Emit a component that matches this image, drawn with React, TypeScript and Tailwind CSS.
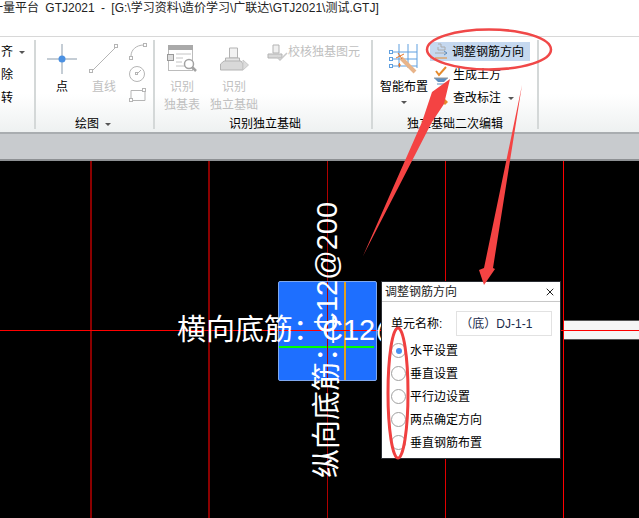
import { X } from "lucide-react";

const font = { fontFamily: '"Liberation Sans", "Noto Sans CJK SC", "DejaVu Sans", sans-serif' };

const Divider = () => <div className="w-[2px] shrink-0 self-stretch my-[3px] bg-[#d4d8d8]" />;

const GroupLabel = ({ children }: { children: React.ReactNode }) => (
  <div className="absolute bottom-0 left-0 right-0 text-center text-[12px] leading-[16px] text-black">{children}</div>
);

const Point = () => (
  <svg width="30" height="30" viewBox="0 0 30 30">
    <path d="M15 0V30M0 15H30" stroke="#8a9bab" strokeWidth="1" />
    <circle cx="15" cy="15" r="3.5" fill="#4a90e2" />
  </svg>
);

const Line = () => (
  <svg width="30" height="30" viewBox="0 0 30 30" fill="none" stroke="#b5b5b5">
    <path d="M3 27L27 3" />
    <rect x="0.5" y="25.5" width="3" height="3" fill="#fff" />
    <rect x="25.5" y="0.5" width="3" height="3" fill="#fff" />
  </svg>
);

const ShapeIcons = () => (
  <div className="flex flex-col gap-[6px] ml-[-2px] mt-[-1px]">
    <svg width="18" height="17" viewBox="0 0 18 17" fill="none" stroke="#b5b5b5">
      <path d="M2 13C2 7 7 2 15 2" />
      <rect x="0.5" y="13.5" width="3" height="3" fill="#fff" />
      <rect x="14.5" y="0.5" width="3" height="3" fill="#fff" />
    </svg>
    <svg width="18" height="16" viewBox="0 0 18 16" fill="none" stroke="#b5b5b5">
      <circle cx="8" cy="8" r="7.5" />
      <path d="M8 8L12 4" />
      <rect x="6.5" y="6.5" width="2" height="2" fill="#fff" />
    </svg>
    <svg width="18" height="14" viewBox="0 0 18 14" fill="none" stroke="#b5b5b5">
      <path d="M2 12.5V2.5H16V12.5Z" />
      <rect x="0.5" y="10.5" width="3" height="3" fill="#fff" />
      <rect x="13.5" y="0.5" width="3" height="3" fill="#fff" />
    </svg>
  </div>
);

const TableScan = () => (
  <svg width="31" height="28" viewBox="0 0 31 28" fill="none">
    <rect x="1.5" y="1.5" width="24" height="24" stroke="#bcbcbc" />
    <rect x="1" y="0" width="25" height="5" fill="#a9a9a9" />
    <path d="M9 9H24M9 13H16M9 17H15M9 21H18" stroke="#c4c4c4" />
    <rect x="0.5" y="9.5" width="6" height="6" fill="#ddd" stroke="#999" />
    <circle cx="22" cy="19" r="4.5" fill="#fff" stroke="#a3a3a3" strokeWidth="1.5" />
    <path d="M25 22L29 26" stroke="#a3a3a3" strokeWidth="2.5" />
  </svg>
);

const Machine = () => (
  <svg width="29" height="24" viewBox="0 0 29 24" fill="none" stroke="#b3b3b3">
    <path d="M9.5 1H17.5V11H9.5Z" fill="#f2f2f2" />
    <path d="M5.5 11H19.5V16H5.5Z" fill="#e4e4e4" />
    <path d="M0.5 17L4 14H21L23 17V23H0.5Z" fill="#d8d8d8" />
    <path d="M23 13L28.5 18L23 23Z" fill="#dcdcdc" stroke="#c8c8c8" />
  </svg>
);

const Check = () => (
  <svg width="21" height="17" viewBox="0 0 21 17" fill="none" stroke="#b3b3b3">
    <path d="M6 1H12V9H6Z" fill="#f0f0f0" />
    <path d="M1 10H15V14H1Z" fill="#d8d8d8" />
    <path d="M10 13L13 16L20 9" stroke="#c9c9c9" strokeWidth="1.5" />
  </svg>
);

const Wand = () => (
  <svg width="30" height="30" viewBox="0 0 30 30" fill="none">
    <path d="M10 0V24M19 0V24M28 0V24M3 8H28M3 15H28M3 22H28" stroke="#5f9fdf" />
    <rect x="0.5" y="6.5" width="3" height="3" stroke="#5f9fdf" />
    <rect x="0.5" y="13.5" width="3" height="3" stroke="#5f9fdf" />
    <rect x="0.5" y="20.5" width="3" height="3" stroke="#5f9fdf" />
    <path d="M12 14L26 28" stroke="#e8b48a" strokeWidth="4" />
    <path d="M9 9L13 15M7 14L15 10M9 21L12 21M10.5 19V23" stroke="#e5762a" />
  </svg>
);

const AdjustIcon = () => (
  <svg width="14" height="17" viewBox="0 0 14 17" fill="none">
    <path d="M4 1H7V4H11V7H4V4M1 10H13" stroke="#aaa" />
    <path d="M1 15H13" stroke="#e58a2c" />
    <path d="M10 8L13 10L10 12" stroke="#5f8fc0" />
  </svg>
);

const EarthIcon = () => (
  <svg width="16" height="19" viewBox="0 0 16 19" fill="none">
    <path d="M3 5L6 9L13 1" stroke="#e58a2c" strokeWidth="2" />
    <path d="M1 12H15L11 16H5Z" fill="#5f8fc0" />
    <path d="M1 12H15" stroke="#999" />
    <path d="M4 18H12" stroke="#5f8fc0" />
  </svg>
);

const CheckLabelIcon = () => (
  <svg width="16" height="16" viewBox="0 0 16 16">
    <rect x="0.5" y="1.5" width="10" height="11" fill="#a6bfdc" stroke="#6c8db3" />
    <path d="M12 9L15 12L12 15L9 12Z" fill="#e58a2c" />
  </svg>
);

const Caret = ({ className = "" }: { className?: string }) => (
  <span className={`inline-block w-0 h-0 border-x-[3px] border-x-transparent border-t-[3px] border-t-[#555] ${className}`} />
);

const Tool = ({ icon, label, gray }: { icon: React.ReactNode; label: React.ReactNode; gray?: boolean }) => (
  <div className={`flex flex-col items-center whitespace-nowrap text-[12px] leading-[18px] ${gray ? "text-[#c0c0c0]" : "text-black"}`}>
    <div className="h-[30px] flex items-center">{icon}</div>
    <div className="mt-[4px] text-center">{label}</div>
  </div>
);

const Radio = ({ label, on }: { label: string; on?: boolean }) => (
  <div className="flex items-center h-[23px] gap-[4px] text-[12px] text-black">
    <div className="w-[15px] h-[15px] rounded-full border border-[#a0a0a0] flex items-center justify-center bg-white">
      {on && <div className="w-[6px] h-[6px] rounded-full bg-[#4a90f0]" />}
    </div>
    <span>{label}</span>
  </div>
);

const Ribbon = () => (
  <div className="h-[98px] shrink-0 flex bg-gradient-to-b from-white from-60% to-[#eef1f1] border-t border-t-[#d8d8d8] border-b-2 border-b-[#a9adb0]">
    <div className="w-[34px] shrink-0 overflow-hidden text-[12px] leading-[17px] text-black">
      <div className="ml-[1px] mt-[7px] flex flex-col gap-[6px]">
        <div className="flex items-center gap-[6px]">
          <span>齐</span>
          <Caret />
        </div>
        <div>除</div>
        <div>转</div>
      </div>
    </div>
    <Divider />
    <div className="relative w-[117px] shrink-0">
      <div className="flex pl-[11px] pt-[7px] gap-[12px]">
        <Tool icon={<Point />} label="点" />
        <Tool icon={<Line />} label="直线" gray />
        <ShapeIcons />
      </div>
      <GroupLabel>
        <span className="inline-flex items-center gap-[6px] pr-[3px]">
          绘图 <Caret />
        </span>
      </GroupLabel>
    </div>
    <Divider />
    <div className="relative w-[216px] shrink-0">
      <div className="flex pl-[9px] pt-[7px] gap-[10px]">
        <Tool icon={<TableScan />} label={<>识别<br />独基表</>} gray />
        <Tool icon={<Machine />} label={<>识别<br />独立基础</>} gray />
        <div className="flex items-center h-[16px] ml-[-1px] text-[12px] text-[#c0c0c0] whitespace-nowrap">
          <Check />
          <span>校核独基图元</span>
        </div>
      </div>
      <GroupLabel>
        <span className="pl-[4px]">识别独立基础</span>
      </GroupLabel>
    </div>
    <Divider />
    <div className="relative w-[164px] shrink-0">
      <div className="flex pl-[6px] pt-[7px] gap-[1px]">
        <div className="flex flex-col items-center text-[12px] leading-[18px] w-[50px]">
          <div className="h-[30px] flex items-center"><Wand /></div>
          <div className="mt-[4px] whitespace-nowrap">智能布置</div>
          <Caret className="mt-[5px]" />
        </div>
        <div className="flex flex-col mt-[-2px] text-[12px] leading-[18px] text-black whitespace-nowrap">
          <div className="flex items-center gap-[4px] bg-[#c5d8ef] h-[19px] w-[100px] pl-[4px]">
            <AdjustIcon />调整钢筋方向
          </div>
          <div className="flex items-center gap-[4px] pl-[3px] h-[28px]"><EarthIcon />生成土方</div>
          <div className="flex items-center gap-[4px] pl-[3px] h-[18px]"><CheckLabelIcon />查改标注 <Caret className="ml-[3px]" /></div>
        </div>
      </div>
      <GroupLabel>
        <span>独立基础二次编辑</span>
      </GroupLabel>
    </div>
    <Divider />
  </div>
);

const Canvas = () => (
  <div className="relative grow bg-black overflow-hidden">
    <div className="absolute top-0 bottom-0 left-[90px] w-[2px] bg-[#8b0000]" />
    <div className="absolute top-0 bottom-0 left-[208px] w-[2px] bg-[#8b0000]" />
    <div className="absolute top-0 bottom-0 left-[327px] w-px bg-[#b00000]" />
    <div className="absolute top-0 bottom-0 left-[445px] w-px bg-[#e00000]" />
    <div className="absolute top-0 bottom-0 left-[563px] w-px bg-[#ff0000]" />
    <div className="absolute left-0 right-0 top-[169px] h-px bg-[#ff0000]" />
    <div className="absolute left-[564px] right-0 top-[159px] h-[20px] bg-[#f5f5f5] border-y border-[#555]">
      <div className="mt-[9px] h-px bg-[#ff0000]" />
    </div>
    <div className="absolute left-[278px] top-[120px] w-[99px] h-[100px] bg-[#1e6fff] border border-[#7fa8f0] rounded-[2px]">
      <div className="absolute left-0 right-[2px] top-[64px] h-[2px] bg-[#00ff00]" />
      <div className="absolute top-0 bottom-0 left-[65px] w-[2px] bg-[#e0a020]" />
      <div className="absolute left-0 right-0 top-[48px] h-px bg-[#ff0000]" />
      <div className="absolute top-0 bottom-0 left-[48px] w-px bg-[#b00000]" />
    </div>
    <div className="absolute left-[177px] top-[150px] text-[29px] leading-[38px] text-white whitespace-nowrap">
      横向底筋：₵12@200
    </div>
    <div className="absolute left-[308px] top-[317px] origin-top-left -rotate-90 text-[29px] leading-[38px] text-white whitespace-nowrap">
      纵向底筋：₵12@200
    </div>
  </div>
);

const Dialog = () => (
  <div className="absolute left-[381px] top-[281px] w-[180px] h-[178px] bg-white border border-[#2a2d33] text-[12px]">
    <div className="h-[20px] flex items-center justify-between pl-[3px] pr-[4px] border-b border-[#c8c8c8]">
      <span className="text-[12px] text-[#222]">调整钢筋方向</span>
      <X size={12} strokeWidth={2} className="text-[#222]" />
    </div>
    <div className="flex items-center mt-[9px] pl-[9px] gap-[14px]">
      <span className="whitespace-nowrap">单元名称:</span>
      <div className="w-[96px] h-[25px] border border-[#e2e2e2] flex items-center pl-[3px] text-[#1a2a4a] whitespace-nowrap">（底）DJ-1-1</div>
    </div>
    <div className="flex flex-col mt-[3px] pl-[9px]">
      <Radio label="水平设置" on />
      <Radio label="垂直设置" />
      <Radio label="平行边设置" />
      <Radio label="两点确定方向" />
      <Radio label="垂直钢筋布置" />
    </div>
  </div>
);

const Annotations = () => (
  <svg className="absolute inset-0 pointer-events-none" width="639" height="518" viewBox="0 0 639 518" fill="none">
    <ellipse cx="489" cy="49.5" rx="62" ry="20" stroke="#f04848" strokeWidth="2.5" />
    <ellipse cx="398" cy="393" rx="10" ry="65" stroke="#f04040" strokeWidth="3" />
    <path d="M363 256L422 122L432 92L450 79L444 104L432 122Z" fill="#f44343" />
    <path d="M522 85L493 268L495 269L484 285L479 270L484 268Z" fill="#f44343" />
  </svg>
);

export default function App() {
  return (
    <div className="relative w-[639px] h-[518px] flex flex-col bg-white overflow-hidden" style={font}>
      <div className="h-[36px] shrink-0 text-[12px] leading-[16px] text-[#222] whitespace-nowrap overflow-hidden [word-spacing:3px]">
        <div className="ml-[-9px]">一量平台 GTJ2021 - [G:\学习资料\造价学习\广联达\GTJ2021\测试.GTJ]</div>
      </div>
      <Ribbon />
      <div className="h-[27px] shrink-0 bg-[#c8cbce] border-b-2 border-b-[#8e9194]" />
      <Canvas />
      <Dialog />
      <Annotations />
    </div>
  );
}
